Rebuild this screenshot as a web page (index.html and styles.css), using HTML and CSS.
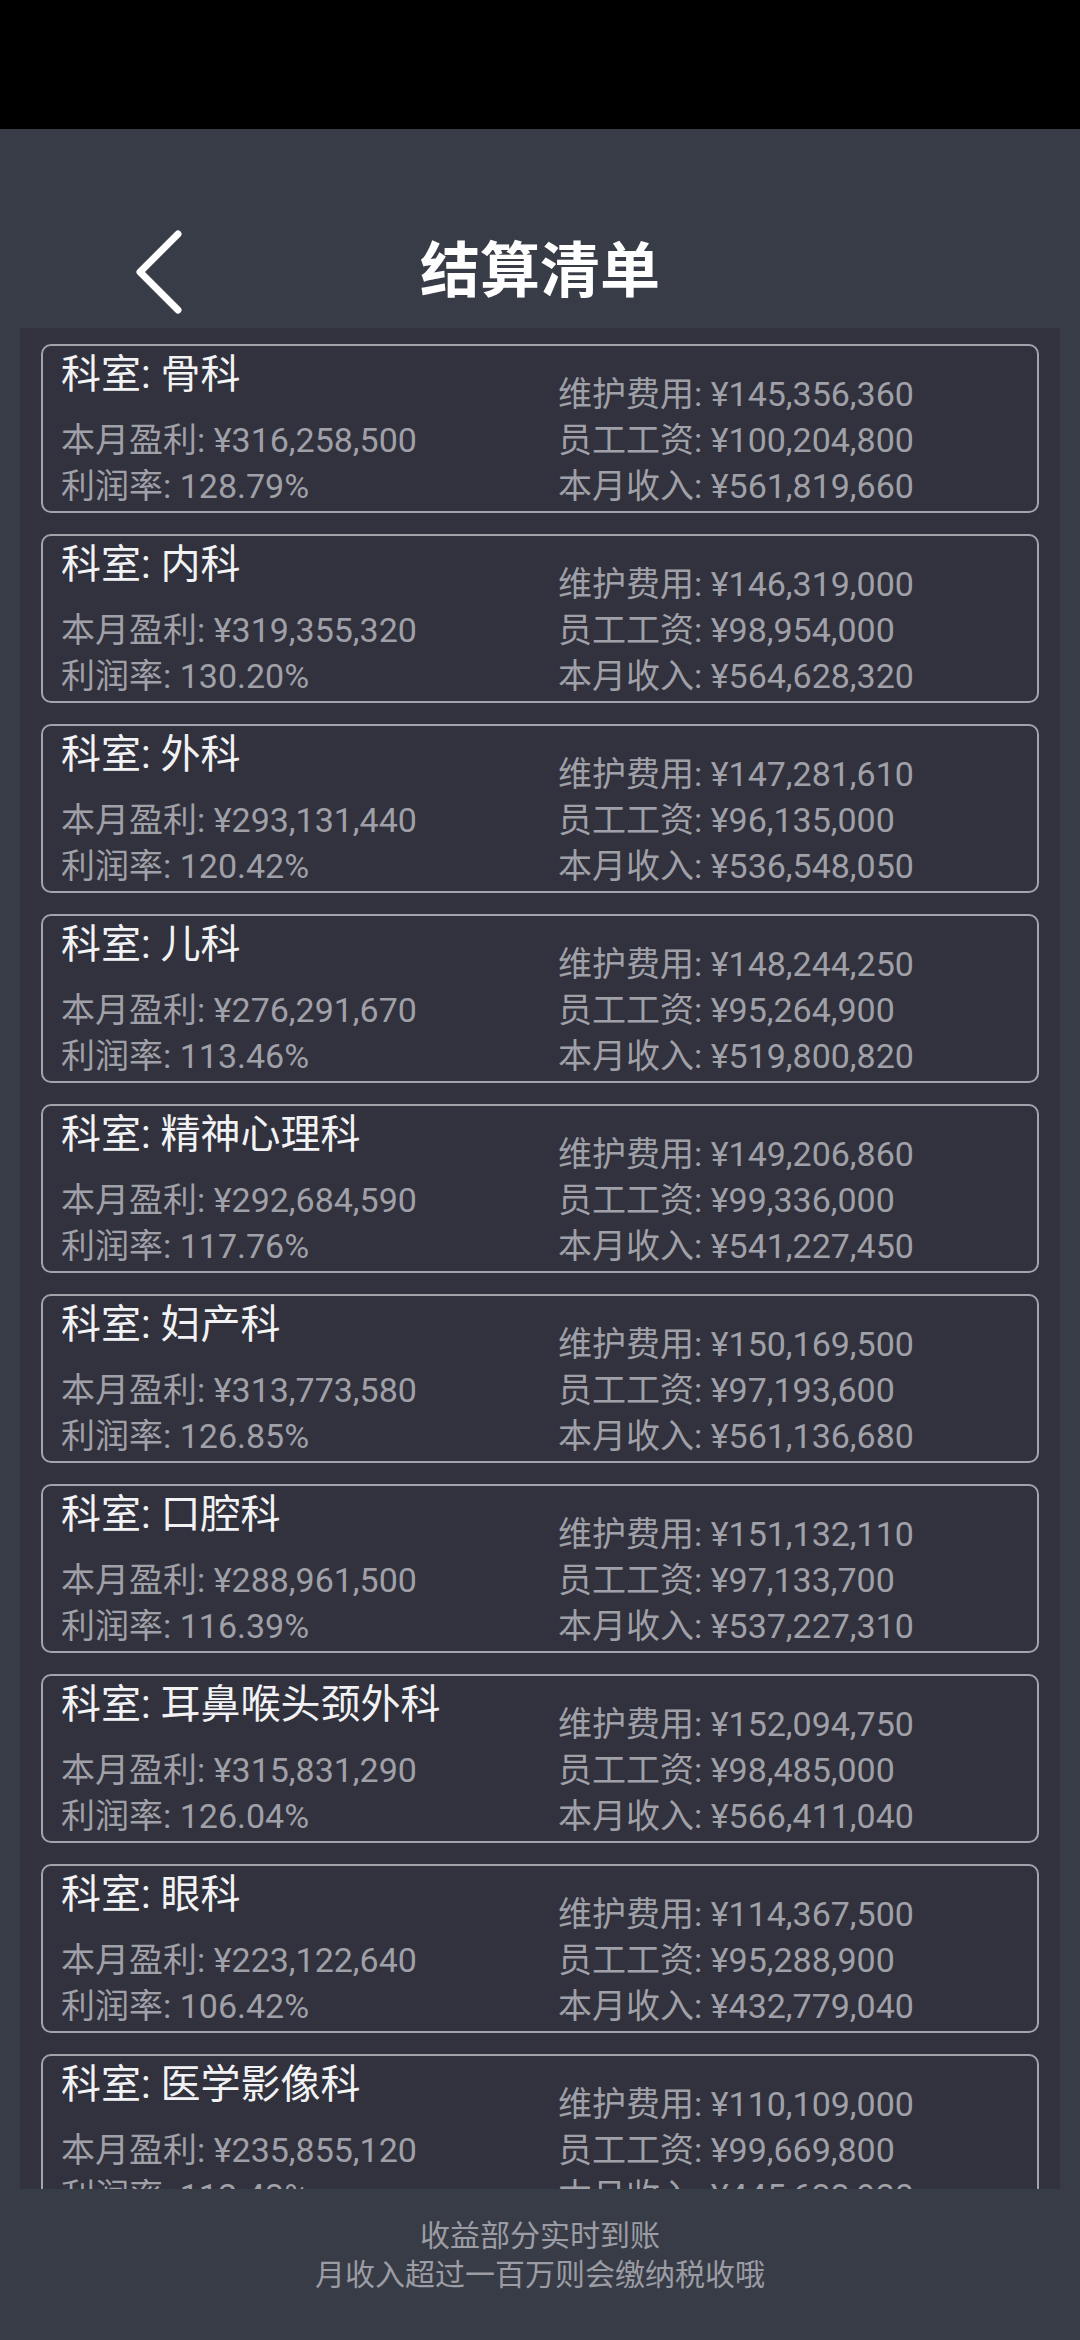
FILE: index.html
```html
<!DOCTYPE html>
<html lang="zh-CN">
<head>
    <meta charset="UTF-8">
    <meta name="viewport" content="width=device-width, initial-scale=1.0">
    <title>结算清单</title>
    <link rel="stylesheet" href="styles.css">
</head>
<body>
<div class="statusbar"></div>

<div class="header">
    <div class="header-row">
        <button class="back" aria-label="返回">
            <svg width="52" height="90" viewBox="0 0 52 90">
                <polyline points="44,9 6,47 44,85" fill="none" stroke="#fff" stroke-width="7" stroke-linecap="round" stroke-linejoin="round"/>
            </svg>
        </button>
        <h1 class="title">结算清单</h1>
        <div></div>
    </div>
</div>

<div class="list">

    <!-- 科室结算 -->
    <div class="card">
        <div class="col left">
            <p class="name">科室: 骨科</p>
            <p class="row">本月盈利: ¥316,258,500</p>
            <p class="row">利润率: 128.79%</p>
        </div>
        <div class="col right">
            <p class="row">维护费用: ¥145,356,360</p>
            <p class="row">员工工资: ¥100,204,800</p>
            <p class="row">本月收入: ¥561,819,660</p>
        </div>
    </div>

    <div class="card">
        <div class="col left">
            <p class="name">科室: 内科</p>
            <p class="row">本月盈利: ¥319,355,320</p>
            <p class="row">利润率: 130.20%</p>
        </div>
        <div class="col right">
            <p class="row">维护费用: ¥146,319,000</p>
            <p class="row">员工工资: ¥98,954,000</p>
            <p class="row">本月收入: ¥564,628,320</p>
        </div>
    </div>

    <div class="card">
        <div class="col left">
            <p class="name">科室: 外科</p>
            <p class="row">本月盈利: ¥293,131,440</p>
            <p class="row">利润率: 120.42%</p>
        </div>
        <div class="col right">
            <p class="row">维护费用: ¥147,281,610</p>
            <p class="row">员工工资: ¥96,135,000</p>
            <p class="row">本月收入: ¥536,548,050</p>
        </div>
    </div>

    <div class="card">
        <div class="col left">
            <p class="name">科室: 儿科</p>
            <p class="row">本月盈利: ¥276,291,670</p>
            <p class="row">利润率: 113.46%</p>
        </div>
        <div class="col right">
            <p class="row">维护费用: ¥148,244,250</p>
            <p class="row">员工工资: ¥95,264,900</p>
            <p class="row">本月收入: ¥519,800,820</p>
        </div>
    </div>

    <div class="card">
        <div class="col left">
            <p class="name">科室: 精神心理科</p>
            <p class="row">本月盈利: ¥292,684,590</p>
            <p class="row">利润率: 117.76%</p>
        </div>
        <div class="col right">
            <p class="row">维护费用: ¥149,206,860</p>
            <p class="row">员工工资: ¥99,336,000</p>
            <p class="row">本月收入: ¥541,227,450</p>
        </div>
    </div>

    <div class="card">
        <div class="col left">
            <p class="name">科室: 妇产科</p>
            <p class="row">本月盈利: ¥313,773,580</p>
            <p class="row">利润率: 126.85%</p>
        </div>
        <div class="col right">
            <p class="row">维护费用: ¥150,169,500</p>
            <p class="row">员工工资: ¥97,193,600</p>
            <p class="row">本月收入: ¥561,136,680</p>
        </div>
    </div>

    <div class="card">
        <div class="col left">
            <p class="name">科室: 口腔科</p>
            <p class="row">本月盈利: ¥288,961,500</p>
            <p class="row">利润率: 116.39%</p>
        </div>
        <div class="col right">
            <p class="row">维护费用: ¥151,132,110</p>
            <p class="row">员工工资: ¥97,133,700</p>
            <p class="row">本月收入: ¥537,227,310</p>
        </div>
    </div>

    <div class="card">
        <div class="col left">
            <p class="name">科室: 耳鼻喉头颈外科</p>
            <p class="row">本月盈利: ¥315,831,290</p>
            <p class="row">利润率: 126.04%</p>
        </div>
        <div class="col right">
            <p class="row">维护费用: ¥152,094,750</p>
            <p class="row">员工工资: ¥98,485,000</p>
            <p class="row">本月收入: ¥566,411,040</p>
        </div>
    </div>

    <div class="card">
        <div class="col left">
            <p class="name">科室: 眼科</p>
            <p class="row">本月盈利: ¥223,122,640</p>
            <p class="row">利润率: 106.42%</p>
        </div>
        <div class="col right">
            <p class="row">维护费用: ¥114,367,500</p>
            <p class="row">员工工资: ¥95,288,900</p>
            <p class="row">本月收入: ¥432,779,040</p>
        </div>
    </div>

    <div class="card">
        <div class="col left">
            <p class="name">科室: 医学影像科</p>
            <p class="row">本月盈利: ¥235,855,120</p>
            <p class="row">利润率: 112.43%</p>
        </div>
        <div class="col right">
            <p class="row">维护费用: ¥110,109,000</p>
            <p class="row">员工工资: ¥99,669,800</p>
            <p class="row">本月收入: ¥445,633,920</p>
        </div>
    </div>

</div>

<!-- 提示 -->
<div class="footer">
    <p>收益部分实时到账</p>
    <p>月收入超过一百万则会缴纳税收哦</p>
</div>

</body>
</html>
```

FILE: styles.css
```css
body {
    margin: 0;
    padding: 0;
    width: 1080px;
    height: 2340px;
    overflow: hidden;
    background-color: #383c47;
    font-family: Roboto, "Noto Sans CJK SC", sans-serif;
    display: flex;
    flex-direction: column;
}

p {
    margin: 0;
}

.statusbar {
    height: 129px;
    background-color: #000;
    flex: none;
}

.header {
    height: 199px;
    flex: none;
    padding-top: 91px;
    box-sizing: border-box;
}

.header-row {
    height: 100px;
    display: grid;
    grid-template-columns: 1fr auto 1fr;
    align-items: center;
}

.back {
    justify-self: start;
    margin-left: 134px;
    padding: 0;
    border: none;
    background: none;
    cursor: pointer;
    display: flex;
}

.title {
    margin: 0 0 8px;
    color: #fff;
    font-size: 60px;
    font-weight: bold;
    line-height: 92px;
    font-family: "Noto Sans CJK SC", sans-serif;
}

/* 滚动列表 */
.list {
    flex: none;
    height: 1861px;
    margin: 0 20px;
    padding: 16px 21px 0;
    box-sizing: border-box;
    background-color: #31323d;
    overflow: hidden;
    display: flex;
    flex-direction: column;
    gap: 21px;
}

.card {
    flex: none;
    height: 169px;
    box-sizing: border-box;
    border: 2px solid #a3a3ab;
    border-radius: 10px;
    padding: 3px 0 2px 18px;
    display: grid;
    grid-template-columns: 497px 1fr;
}

.col {
    display: flex;
    flex-direction: column;
    justify-content: flex-end;
}

.name {
    color: #f2f2f4;
    font-size: 40px;
    line-height: 52px;
    margin-bottom: auto;
}

.row {
    color: #a0a0a8;
    font-size: 34px;
    line-height: 46px;
    white-space: nowrap;
}

.footer {
    flex: 1;
    padding-top: 27px;
    text-align: center;
    color: #9c9ca4;
    font-size: 30px;
    line-height: 39px;
}
```
